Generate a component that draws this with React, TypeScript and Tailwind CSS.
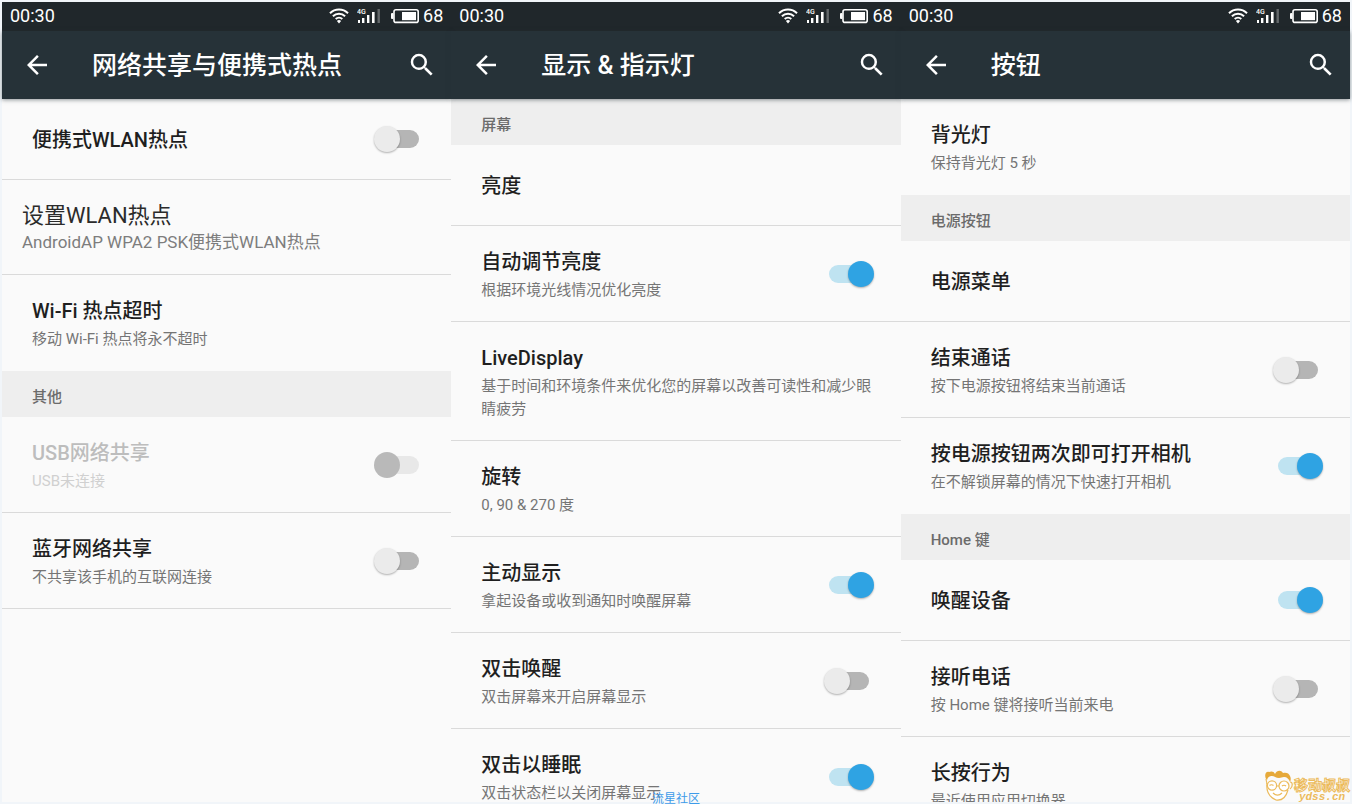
import { clsx } from 'clsx';
import { MdArrowBack, MdSearch } from 'react-icons/md';

interface SettingItem {
  kind?: 'item';
  title: string;
  summary?: string;
  checked?: boolean;
  disabled?: boolean;
  divider?: boolean;
}

interface SectionItem {
  kind: 'section';
  title: string;
}

interface LargeItem {
  kind: 'large';
  title: string;
  summary: string;
}

type Entry = SettingItem | SectionItem | LargeItem;

interface Screen {
  id: string;
  title: string;
  entries: Entry[];
}

const screens: Screen[] = [
  {
    id: 'tethering',
    title: '网络共享与便携式热点',
    entries: [
      { title: '便携式WLAN热点', checked: false },
      { kind: 'large', title: '设置WLAN热点', summary: 'AndroidAP WPA2 PSK便携式WLAN热点' },
      { title: 'Wi-Fi 热点超时', summary: '移动 Wi-Fi 热点将永不超时', divider: false },
      { kind: 'section', title: '其他' },
      { title: 'USB网络共享', summary: 'USB未连接', checked: false, disabled: true },
      { title: '蓝牙网络共享', summary: '不共享该手机的互联网连接', checked: false },
    ],
  },
  {
    id: 'display',
    title: '显示 & 指示灯',
    entries: [
      { kind: 'section', title: '屏幕' },
      { title: '亮度' },
      { title: '自动调节亮度', summary: '根据环境光线情况优化亮度', checked: true },
      { title: 'LiveDisplay', summary: '基于时间和环境条件来优化您的屏幕以改善可读性和减少眼睛疲劳' },
      { title: '旋转', summary: '0, 90 & 270 度' },
      { title: '主动显示', summary: '拿起设备或收到通知时唤醒屏幕', checked: true },
      { title: '双击唤醒', summary: '双击屏幕来开启屏幕显示', checked: false },
      { title: '双击以睡眠', summary: '双击状态栏以关闭屏幕显示', checked: true },
    ],
  },
  {
    id: 'buttons',
    title: '按钮',
    entries: [
      { title: '背光灯', summary: '保持背光灯 5 秒', divider: false },
      { kind: 'section', title: '电源按钮' },
      { title: '电源菜单' },
      { title: '结束通话', summary: '按下电源按钮将结束当前通话', checked: false },
      { title: '按电源按钮两次即可打开相机', summary: '在不解锁屏幕的情况下快速打开相机', checked: true, divider: false },
      { kind: 'section', title: 'Home 键' },
      { title: '唤醒设备', checked: true },
      { title: '接听电话', summary: '按 Home 键将接听当前来电', checked: false },
      { title: '长按行为', summary: '最近使用应用切换器' },
    ],
  },
];

function WifiIcon() {
  return (
    <svg width="20" height="16" viewBox="0 0 20 16" fill="none" stroke="currentColor" strokeWidth="2" aria-hidden="true">
      <path d="M1 5.2C6 .2 14 .2 19 5.2" />
      <path d="M3.9 8.2c3.4-3.3 8.8-3.3 12.2 0" />
      <path d="M6.7 11.1c1.9-1.8 4.7-1.8 6.6 0" />
      <path d="M7.9 13.1a3 3 0 0 1 4.2 0L10 15.4z" fill="currentColor" stroke="none" />
    </svg>
  );
}

function SignalIcon() {
  return (
    <svg width="24" height="16" viewBox="0 0 24 16" fill="currentColor" aria-hidden="true">
      <text x="0" y="6" fontSize="7" fontWeight="500" fontFamily="Roboto, sans-serif">4G</text>
      <rect x="1" y="12" width="2" height="3" />
      <rect x="5" y="10" width="2.4" height="5" />
      <rect x="10" y="7" width="2.4" height="8" />
      <rect x="15" y="4" width="2.6" height="11" />
      <rect x="20.5" y="1" width="2.4" height="14" opacity=".3" />
    </svg>
  );
}

function BatteryIcon() {
  return (
    <svg width="28" height="16" viewBox="0 0 28 16" fill="none" aria-hidden="true">
      <rect x="3" y="1.8" width="24.2" height="12.6" rx="2" stroke="currentColor" strokeWidth="1.6" />
      <rect x="0" y="5" width="2.5" height="6" rx="1" fill="currentColor" />
      <rect x="11" y="4" width="14" height="8.2" fill="currentColor" />
    </svg>
  );
}

function StatusBar() {
  return (
    <div className="flex h-[29px] items-center bg-[#20272b] px-2 pb-0.5 text-lg text-white">
      <span className="flex-1">00:30</span>
      <WifiIcon />
      <span className="ml-2 flex"><SignalIcon /></span>
      <span className="mr-1 ml-2.5 flex"><BatteryIcon /></span>
      <span>68</span>
    </div>
  );
}

function Toolbar({ title }: { title: string }) {
  return (
    <header className="relative flex h-[68px] items-center bg-[#263238] pr-3.5 pl-5 text-white shadow-[0_1px_4px_rgba(38,50,56,0.5)]">
      <button type="button" aria-label="返回">
        <MdArrowBack className="size-[30px]" />
      </button>
      <h1 className="ml-10 flex-1 pt-0.5 text-[25px] font-medium">{title}</h1>
      <button type="button" aria-label="搜索">
        <MdSearch className="size-[30px]" />
      </button>
    </header>
  );
}

function Switch({ checked, disabled }: { checked: boolean; disabled?: boolean }) {
  return (
    <input
      type="checkbox"
      role="switch"
      defaultChecked={checked}
      disabled={disabled}
      className={clsx(
        'relative h-[26px] w-[50px] shrink-0 appearance-none',
        'before:absolute before:inset-x-[5px] before:top-1 before:h-[18px] before:rounded-full before:bg-[#b5b5b5]',
        'after:absolute after:top-0 after:left-0 after:size-[26px] after:rounded-full after:bg-[#ebebeb] after:shadow-[0_1px_2px_rgba(0,0,0,0.3)]',
        'checked:before:bg-[#bfe3f1] checked:after:left-6 checked:after:bg-[#2fa3e3]',
        'disabled:before:bg-[#e8e8e8] disabled:after:bg-[#b9b9b9] disabled:after:shadow-none',
      )}
    />
  );
}

function SettingRow({ item }: { item: SettingItem }) {
  const { title, summary, checked, disabled, divider = true } = item;
  const className = clsx(
    'flex w-full items-center justify-between border-b pr-[27px] pl-[30px] text-left',
    divider ? 'border-[#dadada]' : 'border-transparent',
  );
  const text = (
    <span className={clsx('block', summary ? 'pt-[22px] pb-[19px]' : 'pt-[27px] pb-[25px]')}>
      <span className={clsx('block text-xl leading-7 font-medium', disabled ? 'text-[#bdbdbd]' : 'text-[#1f1f1f]')}>
        {title}
      </span>
      {summary && (
        <span className={clsx('mt-[3px] block text-[15px] leading-[23px]', disabled ? 'text-[#d0d0d0]' : 'text-[#757575]')}>
          {summary}
        </span>
      )}
    </span>
  );

  if (checked === undefined) {
    return <button type="button" className={className}>{text}</button>;
  }
  return (
    <label className={className}>
      {text}
      <Switch checked={checked} disabled={disabled} />
    </label>
  );
}

function LargeRow({ item }: { item: LargeItem }) {
  return (
    <button type="button" className="block w-full border-b border-[#dadada] px-5 pt-[22px] pb-5 text-left">
      <span className="block text-[22px] leading-7 text-[#2b2b2b]">{item.title}</span>
      <span className="block text-[17px] leading-6 text-[#7d7d7d]">{item.summary}</span>
    </button>
  );
}

function SectionHeader({ title }: { title: string }) {
  return (
    <h2 className="bg-[#eeeeee] px-[30px] pt-[15px] pb-2 text-[15px] leading-[23px] font-medium text-[#6b6b6b]">
      {title}
    </h2>
  );
}

function PhoneScreen({ screen }: { screen: Screen }) {
  return (
    <section className="flex min-w-0 flex-1 flex-col bg-[#fafafa]">
      <StatusBar />
      <Toolbar title={screen.title} />
      <div className="min-h-0 flex-1 overflow-hidden">
        {screen.entries.map((entry) => {
          if (entry.kind === 'section') return <SectionHeader key={entry.title} title={entry.title} />;
          if (entry.kind === 'large') return <LargeRow key={entry.title} item={entry} />;
          return <SettingRow key={entry.title} item={entry} />;
        })}
      </div>
    </section>
  );
}

function SiteLogo() {
  return (
    <div className="absolute right-0.5 bottom-0.5 flex items-end text-[#ecbb5c]">
      <svg width="30" height="32" viewBox="0 0 30 32" fill="none" stroke="currentColor" strokeWidth="1.2" aria-hidden="true">
        <path d="M3 13c-1 8 2 14 9 17 6 1 10-3 12-10" fill="#fff" />
        <path d="M2 9C0 5 2 1 5 2c2-1 5-1 6 2 2-4 6-4 8-1 3-1 6 0 7 3 1 2 1 4 0 6-1-3-3-5-6-5-2 0-3 1-5 1-3 0-5-2-7-2-3 0-4 1-5 4z" fill="#e6a93a" stroke="none" />
        <path d="M2 9l1 5M26 12c3 0 3 5 0 7" />
        <circle cx="8" cy="15.5" r="4.6" fill="#fff" />
        <circle cx="20" cy="16" r="5" fill="#fff" />
        <path d="M12.6 16H15M5.5 15.5c1-1 3-1 4 0M18 16c1-1 3-1 4 0M9 23c3 3 6 3 9 0" />
      </svg>
      <div className="flex flex-col items-center">
        <span className="text-sm leading-4 font-bold text-white [-webkit-text-stroke:1px_#ecbb5c]">移动叔叔</span>
        <span className="font-mono text-[11px] leading-[9px] font-bold italic">ydss.cn</span>
      </div>
    </div>
  );
}

export default function App() {
  return (
    <main className="relative flex h-screen overflow-hidden bg-[#f1f5f9] p-0.5 font-[Roboto,'Noto_Sans_CJK_SC',sans-serif]">
      {screens.map((screen) => (
        <PhoneScreen key={screen.id} screen={screen} />
      ))}
      <span className="absolute bottom-0 left-1/2 -translate-x-1/2 text-xs leading-[10px] text-[#3d9be9]">流星社区</span>
      <SiteLogo />
    </main>
  );
}
